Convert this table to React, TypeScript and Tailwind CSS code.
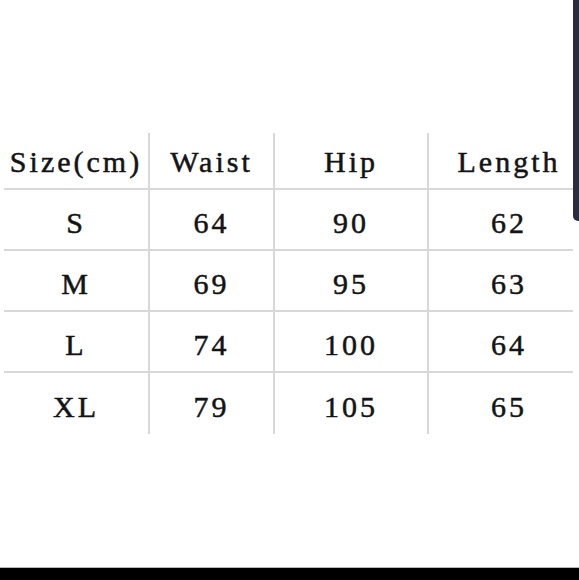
import React from "react";

type Row = { size: string; waist: string; hip: string; length: string };

const rows: Row[] = [
  { size: "S", waist: "64", hip: "90", length: "62" },
  { size: "M", waist: "69", hip: "95", length: "63" },
  { size: "L", waist: "74", hip: "100", length: "64" },
  { size: "XL", waist: "79", hip: "105", length: "65" },
];

const cell =
  "flex items-center justify-center font-['Liberation_Serif','Times_New_Roman',serif] text-[30px] tracking-[3px] text-[#141414] [-webkit-text-stroke:0.5px_#141414]";

const App = () => {
  return (
    <div className="relative w-[579px] h-[580px] bg-white overflow-hidden flex flex-col">
      <div className="flex-1 pt-[133px] pl-[4px]">
        <div className="grid w-[569px] grid-cols-[146px_125px_154px_144px]">
          <div className={`${cell} h-[57px] pt-[2px] border-r-2 border-b-2 border-[#d8d8d8]`}>
            Size(cm)
          </div>
          <div className={`${cell} h-[57px] pt-[2px] border-r-2 border-b-2 border-[#d8d8d8]`}>
            Waist
          </div>
          <div className={`${cell} h-[57px] pt-[2px] border-r-2 border-b-2 border-[#d8d8d8]`}>
            Hip
          </div>
          <div className={`${cell} h-[57px] pt-[2px] pl-[16px] border-b-2 border-[#d8d8d8]`}>
            Length
          </div>
          {rows.map((r, i) => {
            const last = i === rows.length - 1;
            const b = last ? "" : "border-b-2";
            return (
              <React.Fragment key={r.size}>
                <div className={`${cell} h-[61px] pt-[6px] border-r-2 ${b} border-[#d8d8d8]`}>
                  {r.size}
                </div>
                <div className={`${cell} h-[61px] pt-[6px] border-r-2 ${b} border-[#d8d8d8]`}>
                  {r.waist}
                </div>
                <div className={`${cell} h-[61px] pt-[6px] border-r-2 ${b} border-[#d8d8d8]`}>
                  {r.hip}
                </div>
                <div className={`${cell} h-[61px] pt-[6px] pl-[16px] ${b} border-[#d8d8d8]`}>
                  {r.length}
                </div>
              </React.Fragment>
            );
          })}
        </div>
      </div>

      {/* bottom bar */}
      <div className="h-[13px] border-t border-[#b8b8b8] bg-black" />

      {/* scroll handle on the right edge */}
      <div className="absolute right-0 top-0 w-[6px] h-[221px] rounded-bl-[5px] bg-[#2c2c3e]" />
    </div>
  );
};

export default App;
